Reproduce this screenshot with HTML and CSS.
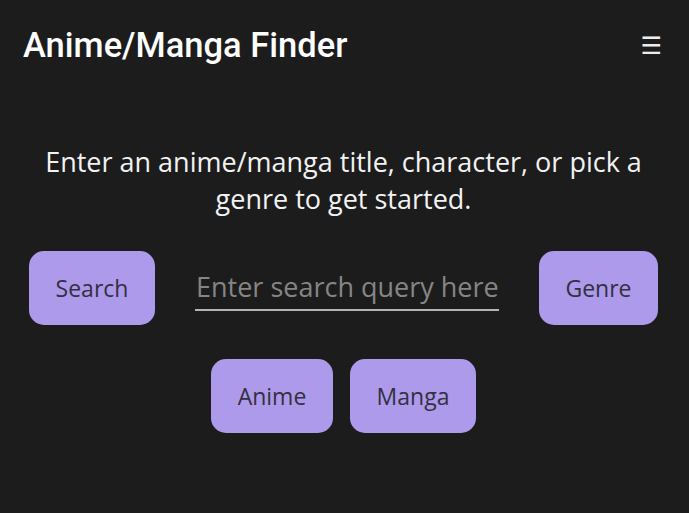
FILE: index.html
```html
<!DOCTYPE html>
<html lang="en">
<head>
<meta charset="utf-8">
<title>Anime/Manga Finder</title>
<link rel="stylesheet" href="styles.css">
</head>
<body>
<header class="topbar">
  <h1 class="brand">Anime/Manga Finder</h1>
  <button class="menu" aria-label="Menu">☰</button>
</header>
<main class="main">
  <p class="intro">Enter an anime/manga title, character, or pick a genre to get started.</p>
  <div class="row row-search">
    <button class="btn btn-search">Search</button>
    <input class="query" type="text" placeholder="Enter search query here">
    <button class="btn btn-genre">Genre</button>
  </div>
  <div class="row row-type">
    <button class="btn btn-anime">Anime</button>
    <button class="btn btn-manga">Manga</button>
  </div>
</main>
</body>
</html>
```
FILE: styles.css
```css
html, body {
  margin: 0;
  padding: 0;
  background: #1c1c1c;
  height: 100%;
}
body {
  font-family: "Open Sans", "Liberation Sans", sans-serif;
  color: #f2f2f2;
}
.topbar {
  display: flex;
  align-items: center;
  justify-content: space-between;
  padding: 25px 27px 0 23px;
  height: 40px;
}
.brand {
  margin: 0;
  font-family: Roboto, "Liberation Sans", sans-serif;
  font-weight: 500;
  font-size: 34.5px;
  color: #ffffff;
  letter-spacing: 0;
}
.menu {
  background: none;
  border: none;
  color: #ececec;
  font-size: 24px;
  padding: 0;
  margin-top: 1px;
  line-height: 1;
  font-family: "DejaVu Sans", sans-serif;
}
.main {
  display: flex;
  flex-direction: column;
  align-items: center;
  padding: 78px 2px 0 0;
}
.intro {
  margin: 0;
  text-align: center;
  font-size: 27px;
  line-height: 37px;
  width: 640px;
  color: #f2f2f2;
}
.row {
  display: flex;
  align-items: center;
  justify-content: center;
}
.row-search {
  margin-top: 34px;
  gap: 40px;
}
.row-type {
  margin-top: 34px;
  gap: 17px;
}
.btn {
  font-family: "Open Sans", "Liberation Sans", sans-serif;
  font-size: 23px;
  color: #33303f;
  background: #ad9aea;
  border: none;
  border-radius: 15px;
  height: 74px;
  padding: 0;
}
.btn-search { width: 126px; }
.btn-genre { width: 119px; }
.btn-anime { width: 122px; }
.btn-manga { width: 126px; }
.query {
  width: 304px;
  box-sizing: border-box;
  background: transparent;
  border: none;
  border-bottom: 2px solid #b5b5b5;
  font-family: "Open Sans", "Liberation Sans", sans-serif;
  font-size: 27px;
  color: #ddd;
  padding: 0 0 2px 1px;
  margin: 0;
  outline: none;
  height: 46px;
}
.query::placeholder {
  color: #858585;
}
```
